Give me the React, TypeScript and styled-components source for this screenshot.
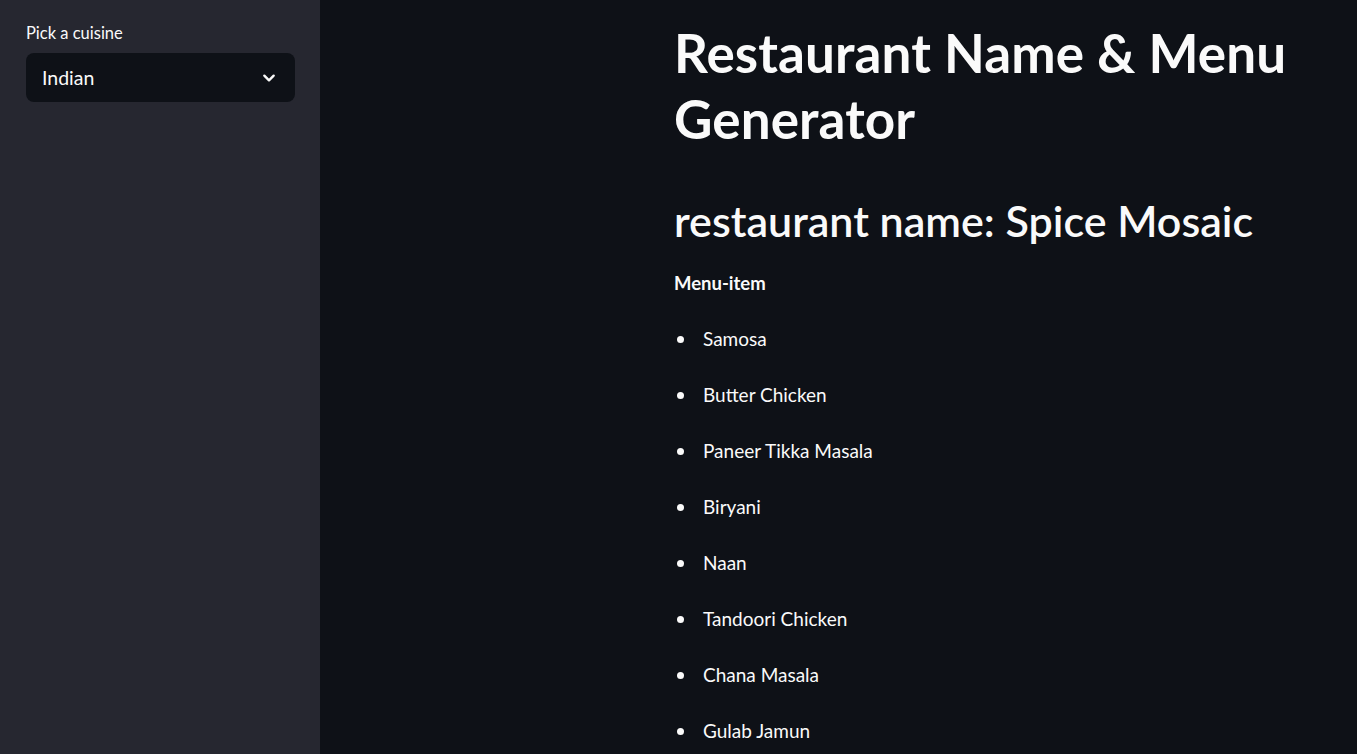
import styled, { createGlobalStyle } from "styled-components";

const GlobalStyle = createGlobalStyle`
  html, body {
    margin: 0;
    padding: 0;
    height: 100%;
    overflow: hidden;
    background: #0e1117;
  }
  body {
    font-family: "Lato", "Noto Sans", sans-serif;
    color: #fafafa;
  }
`;

const menuItems = [
  "Samosa",
  "Butter Chicken",
  "Paneer Tikka Masala",
  "Biryani",
  "Naan",
  "Tandoori Chicken",
  "Chana Masala",
  "Gulab Jamun",
];

const App = () => {
  return (
    <>
      <GlobalStyle />
      <Layout>
        {/* sidebar */}
        <Sidebar>
          <Label>Pick a cuisine</Label>
          <Select>
            <span>Indian</span>
            <svg width="16" height="16" viewBox="0 0 24 24" fill="none">
              <path
                d="M5 8.5l7 7 7-7"
                stroke="#fafafa"
                strokeWidth="3.6"
                strokeLinecap="round"
                strokeLinejoin="round"
              />
            </svg>
          </Select>
        </Sidebar>

        {/* main content */}
        <Main>
          <Content>
            <Title>Restaurant Name &amp; Menu Generator</Title>
            <Subtitle>restaurant name: Spice Mosaic</Subtitle>
            <Strong>Menu-item</Strong>
            <List>
              {menuItems.map((item) => (
                <Item key={item}>{item}</Item>
              ))}
            </List>
          </Content>
        </Main>
      </Layout>
    </>
  );
};
export default App;

const Layout = styled.div`
  display: flex;
  height: 100vh;
  width: 100%;
`;

const Sidebar = styled.aside`
  width: 320px;
  flex-shrink: 0;
  background: #262730;
  padding: 22px 25px 0 26px;
  box-sizing: border-box;
`;

const Label = styled.div`
  font-size: 16.5px;
  line-height: 22px;
  margin-bottom: 9px;
`;

const Select = styled.div`
  height: 49px;
  background: #0e1117;
  border-radius: 8px;
  display: flex;
  align-items: center;
  justify-content: space-between;
  padding: 0 18px 0 16px;
  font-size: 19.5px;
`;

const Main = styled.main`
  flex: 1;
  background: #0e1117;
  padding: 20px 0 0 354px;
  overflow: hidden;
`;

const Content = styled.div`
  width: 660px;
`;

const Title = styled.h1`
  margin: 0;
  font-size: 53px;
  font-weight: 700;
  line-height: 66px;
  letter-spacing: 0.1px;
`;

const Subtitle = styled.h2`
  margin: 42px 0 0;
  font-size: 43px;
  font-weight: 600;
  line-height: 54px;
`;

const Strong = styled.div`
  margin-top: 20px;
  font-size: 18.5px;
  font-weight: 700;
  line-height: 30px;
`;

const List = styled.ul`
  margin: 26px 0 0;
  padding: 0;
  list-style: none;
`;

const Item = styled.li`
  display: flex;
  align-items: center;
  font-size: 19px;
  line-height: 30px;
  margin-bottom: 26px;

  &::before {
    content: "";
    width: 7px;
    height: 7px;
    border-radius: 50%;
    background: #fafafa;
    margin: 0 19px 0 3px;
  }
`;
